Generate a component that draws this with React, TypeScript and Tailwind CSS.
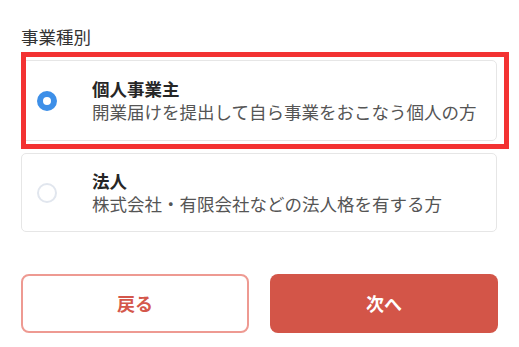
import React, { useState } from "react"

const options = [
  { id: "individual", title: "個人事業主", desc: "開業届けを提出して自ら事業をおこなう個人の方" },
  { id: "corporate", title: "法人", desc: "株式会社・有限会社などの法人格を有する方" },
]

const App: React.FC = () => {
  const [selected, setSelected] = useState("individual")

  const card = (opt: (typeof options)[number], cls: string) => {
    const active = selected === opt.id
    return (
      <div
        onClick={() => setSelected(opt.id)}
        className={`flex items-center w-[476px] rounded-[5px] border border-[#e6e6e6] bg-white pl-[15px] ${cls}`}
      >
        {active ? (
          <div className="w-[20px] h-[20px] shrink-0 rounded-full border-[6px] border-[#3d8fe8] bg-white" />
        ) : (
          <div className="w-[20px] h-[20px] shrink-0 rounded-full border-2 border-[#e1e6ee] bg-white" />
        )}
        <div className="flex flex-col ml-[35px]">
          <span className="text-[17.5px] leading-[22px] font-bold text-[#262626]">{opt.title}</span>
          <span className="text-[17.5px] leading-[24px] text-[#555]">{opt.desc}</span>
        </div>
      </div>
    )
  }

  return (
    <div
      className="w-[519px] h-[347px] bg-white overflow-hidden pl-[21px]"
      style={{ fontFamily: '"Noto Sans CJK JP", "Noto Sans", sans-serif' }}
    >
      <div className="pt-[25px] text-[17.5px] leading-[24px] text-[#333]">事業種別</div>

      <div className="relative mt-[11px]">
        {card(options[0], "h-[81px]")}
        {/* highlight annotation */}
        <div className="absolute left-0 top-[-8px] w-[488px] h-[97px] border-[5px] border-[#f33232] pointer-events-none" />
      </div>

      {card(options[1], "mt-[12px] h-[79px]")}

      <div className="flex gap-[21px] mt-[42px]">
        <button className="w-[228px] h-[59px] rounded-[8px] border-2 border-[#ee9a92] bg-white text-[18px] font-bold text-[#d4574b]">
          戻る
        </button>
        <button className="w-[228px] h-[59px] rounded-[8px] bg-[#d35548] text-[18px] font-bold text-white">
          次へ
        </button>
      </div>
    </div>
  )
}

export default App
